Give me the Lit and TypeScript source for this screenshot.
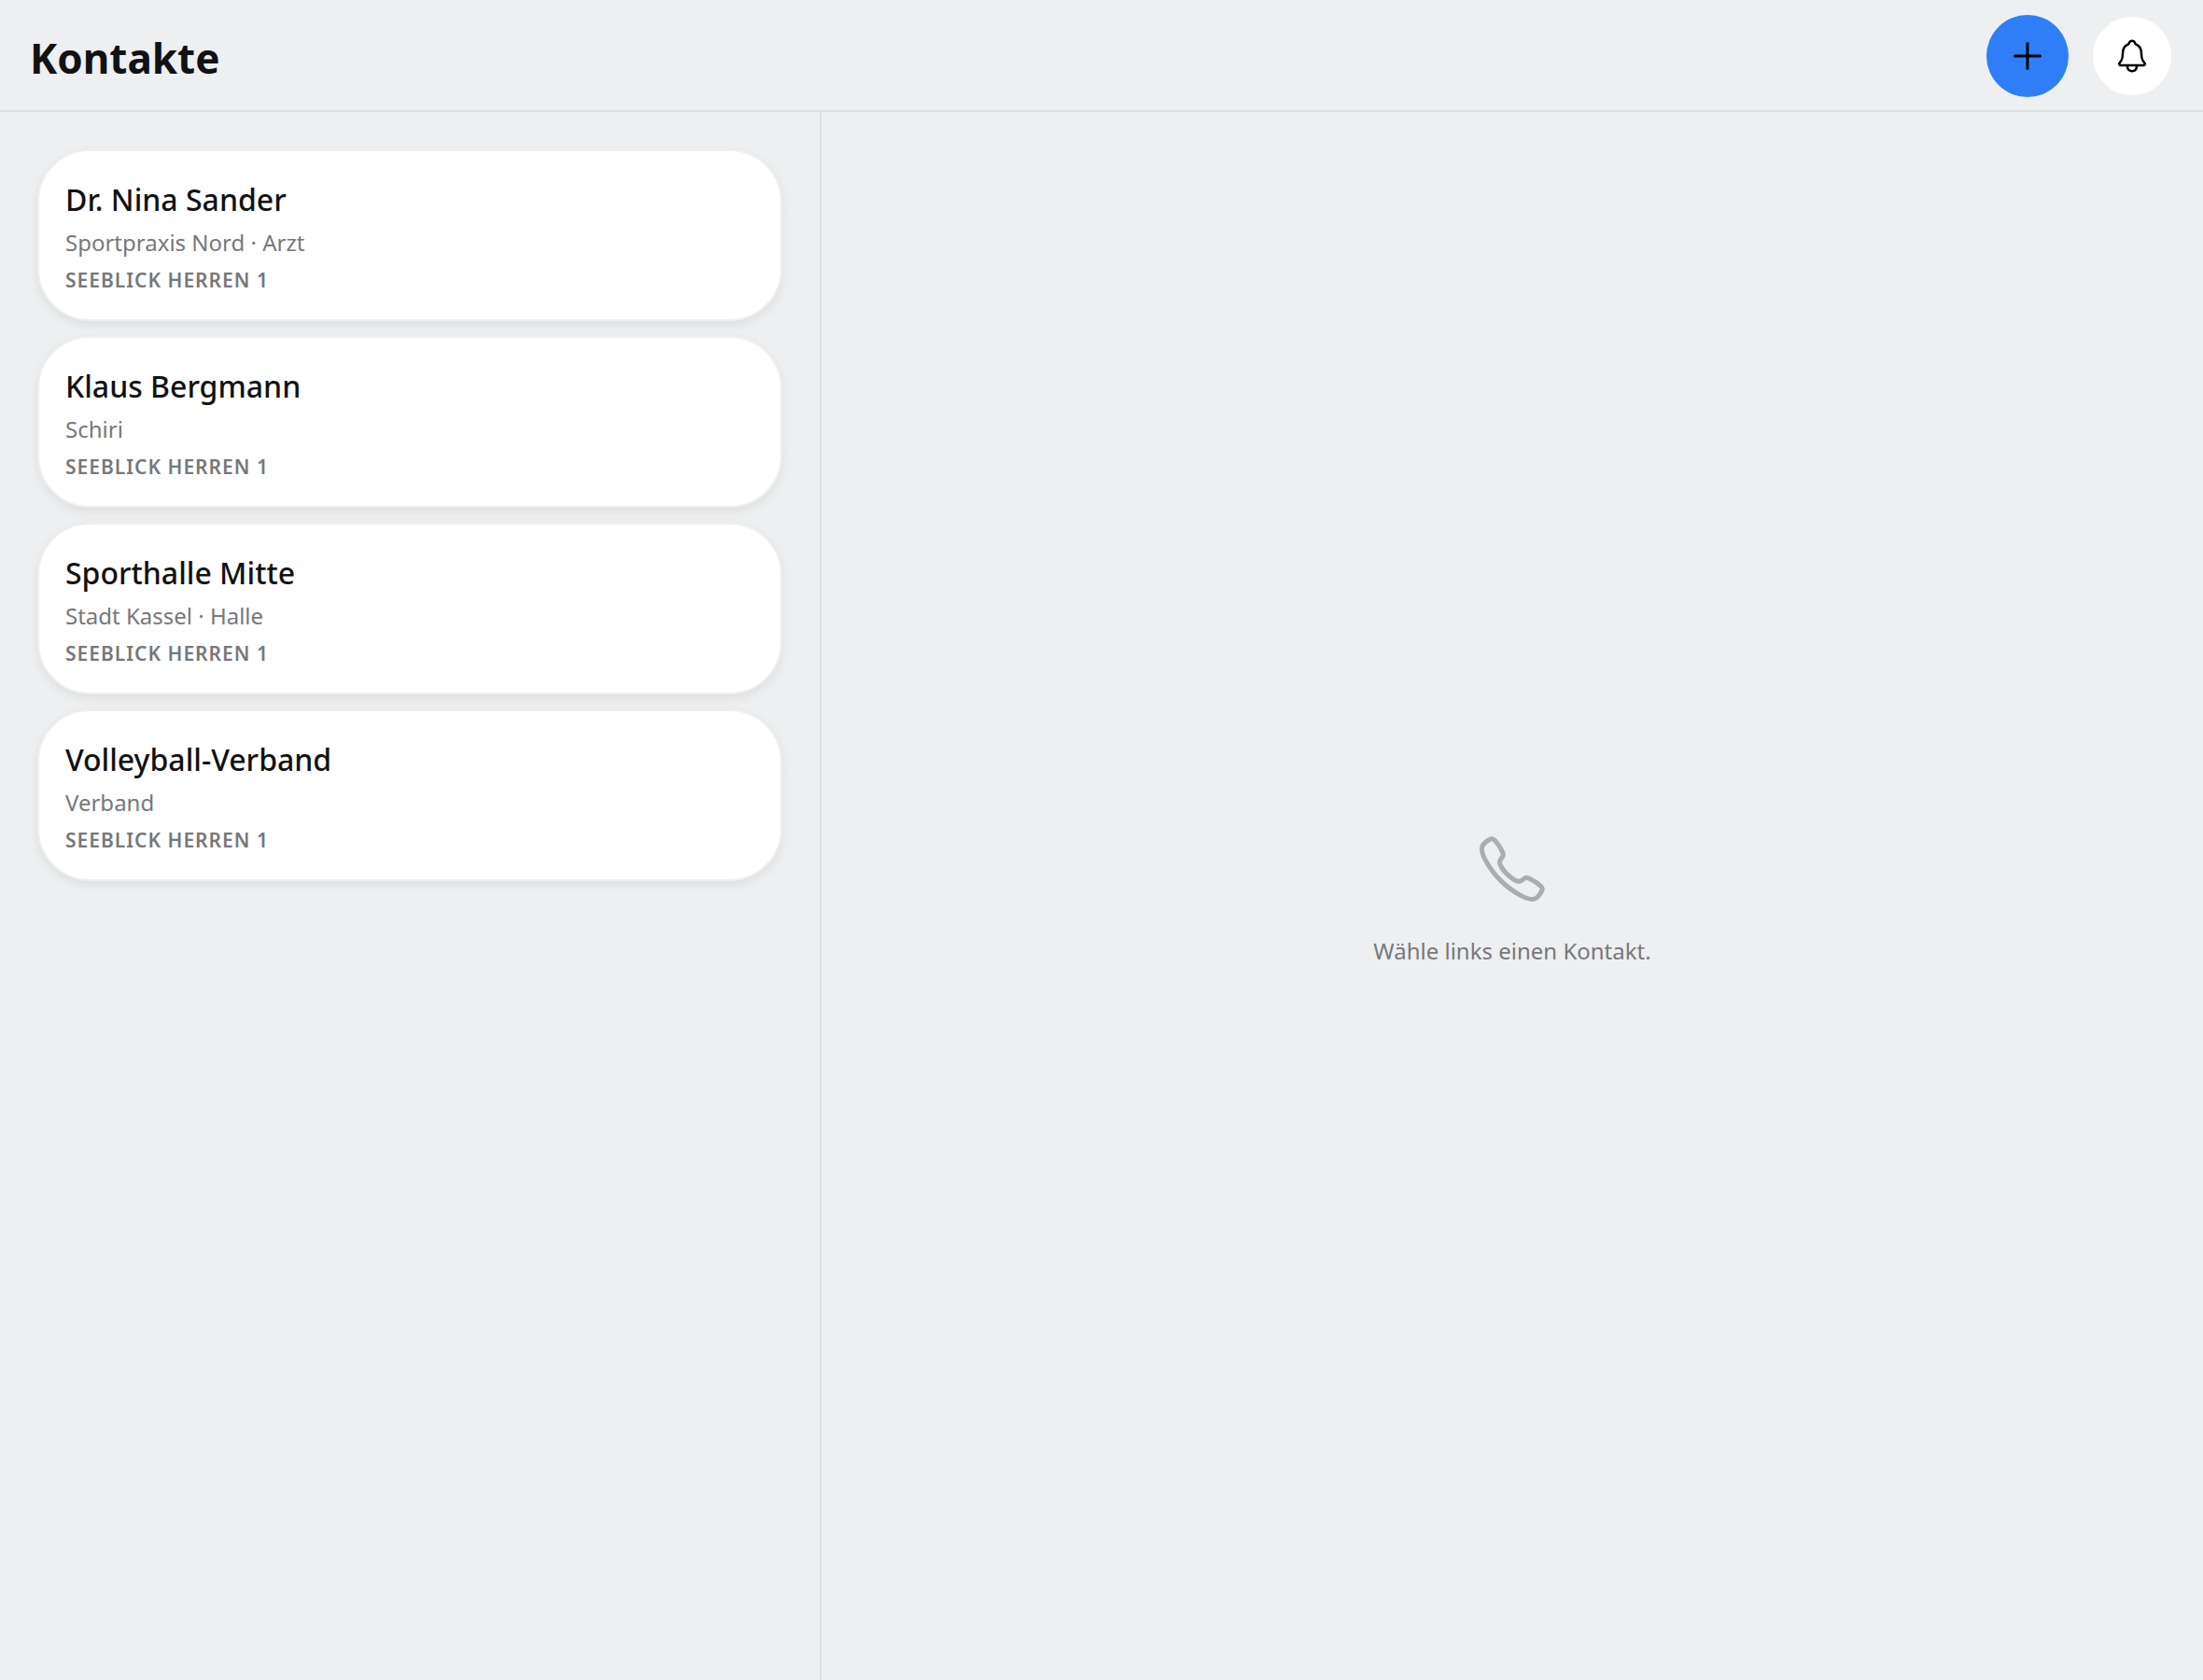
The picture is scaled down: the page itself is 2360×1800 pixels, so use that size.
import { LitElement, html, css } from "lit";
import { customElement, property, state } from "lit/decorators.js";

interface Contact {
  name: string;
  detail: string;
  team: string;
}

const CONTACTS: Contact[] = [
  { name: "Dr. Nina Sander", detail: "Sportpraxis Nord · Arzt", team: "Seeblick Herren 1" },
  { name: "Klaus Bergmann", detail: "Schiri", team: "Seeblick Herren 1" },
  { name: "Sporthalle Mitte", detail: "Stadt Kassel · Halle", team: "Seeblick Herren 1" },
  { name: "Volleyball-Verband", detail: "Verband", team: "Seeblick Herren 1" },
];

@customElement("contact-card")
class ContactCard extends LitElement {
  @property({ attribute: false }) contact!: Contact;

  static styles = css`
    :host {
      display: block;
    }
    .card {
      display: flex;
      flex-direction: column;
      align-items: flex-start;
      box-sizing: border-box;
      width: 100%;
      margin: 0;
      padding: 28px 28px 24px;
      border: 2px solid #eeefef;
      border-radius: 56px;
      background: #fff;
      box-shadow: 0 4px 12px rgba(17, 18, 20, 0.07);
      font-family: "Noto Sans", "Open Sans", sans-serif;
      text-align: left;
      cursor: pointer;
    }
    .name {
      color: #111214;
      font-size: 32px;
      font-weight: 500;
      line-height: 48px;
    }
    .detail {
      color: #77787a;
      font-size: 24px;
      line-height: 44px;
    }
    .team {
      color: #77787a;
      font-size: 21px;
      font-weight: 600;
      line-height: 36px;
      letter-spacing: 1px;
      text-transform: uppercase;
    }
  `;

  render() {
    return html`
      <button class="card" type="button">
        <span class="name">${this.contact.name}</span>
        <span class="detail">${this.contact.detail}</span>
        <span class="team">${this.contact.team}</span>
      </button>
    `;
  }
}

@customElement("app-root")
class AppRoot extends LitElement {
  @state() private contacts = CONTACTS;

  static styles = css`
    :host {
      display: block;
      font-family: "Noto Sans", "Open Sans", sans-serif;
      color: #111214;
    }
    .page {
      display: flex;
      flex-direction: column;
      min-height: 100vh;
      background: #edeff1;
    }
    .topbar {
      display: flex;
      align-items: center;
      justify-content: space-between;
      padding: 16px 32px 14px;
      border-bottom: 2px solid #dedfe1;
    }
    .title {
      margin: 0;
      padding-top: 4px;
      font-size: 44px;
      font-weight: 700;
      line-height: 64px;
    }
    .actions {
      display: flex;
      gap: 24px;
    }
    .round {
      display: flex;
      align-items: center;
      justify-content: center;
      box-sizing: border-box;
      width: 88px;
      height: 88px;
      padding: 0;
      border: 0;
      border-radius: 50%;
      color: #000;
      cursor: pointer;
    }
    .add {
      background: #2f7ef7;
    }
    .alerts {
      border: 2px solid #eeefef;
      background: #fff;
    }
    .icon {
      display: block;
      fill: none;
      stroke: currentColor;
      stroke-width: 32;
      stroke-linecap: round;
      stroke-linejoin: round;
    }
    .icon-add {
      width: 48px;
      height: 48px;
    }
    .icon-bell {
      width: 40px;
      height: 40px;
    }
    .icon-phone {
      width: 80px;
      height: 80px;
      color: #abacad;
      stroke-linecap: butt;
      stroke-linejoin: miter;
      stroke-miterlimit: 10;
    }
    .body {
      display: flex;
      flex: 1;
    }
    .sidebar {
      flex: 0 0 880px;
      box-sizing: border-box;
      border-right: 2px solid #dedfe1;
    }
    .list {
      display: flex;
      flex-direction: column;
      gap: 16px;
      margin: 0;
      padding: 40px;
      list-style: none;
    }
    .empty {
      display: flex;
      flex: 1;
      flex-direction: column;
      align-items: center;
      justify-content: center;
      gap: 28px;
      padding-top: 10px;
    }
    .hint {
      margin: 0;
      color: #77787a;
      font-size: 24px;
      line-height: 40px;
    }
  `;

  render() {
    return html`
      <div class="page">
        <header class="topbar">
          <h1 class="title">Kontakte</h1>
          <div class="actions">
            <button class="round add" type="button" aria-label="Kontakt hinzufügen">
              <svg class="icon icon-add" viewBox="0 0 512 512" aria-hidden="true">
                <path d="M256 112v288M400 256H112" />
              </svg>
            </button>
            <button class="round alerts" type="button" aria-label="Benachrichtigungen">
              <svg class="icon icon-bell" viewBox="0 0 512 512" aria-hidden="true">
                <path d="M427.68 351.43C402 320 383.87 304 383.87 217.35 383.87 138 343.35 109.73 310 96c-4.43-1.82-8.6-6-9.95-10.55C294.2 65.54 277.8 48 256 48s-38.21 17.55-44 37.47c-1.35 4.6-5.52 8.71-9.95 10.53-33.39 13.75-73.87 41.92-73.87 121.35C128.13 304 110 320 84.32 351.43 73.68 364.45 83 384 101.61 384h308.88c18.51 0 27.77-19.61 17.19-32.57zM320 384v16a64 64 0 01-128 0v-16" />
              </svg>
            </button>
          </div>
        </header>
        <main class="body">
          <nav class="sidebar" aria-label="Kontakte">
            <ul class="list">
              ${this.contacts.map(
                (contact) => html`<li><contact-card .contact=${contact}></contact-card></li>`
              )}
            </ul>
          </nav>
          <section class="empty">
            <svg class="icon icon-phone" viewBox="0 0 512 512" aria-hidden="true">
              <path d="M451 374c-15.88-16-54.34-39.35-73-48.76-24.3-12.24-26.3-13.24-45.4.95-12.74 9.47-21.21 17.93-36.12 14.75s-47.31-21.11-75.68-49.39-47.34-61.62-50.53-76.48 5.41-23.23 14.79-36c13.22-18 12.22-21 .92-45.3-8.81-18.9-32.84-57-48.9-72.8C119.9 44 119.9 47 108.83 51.6A160.15 160.15 0 0083 65.37C67 76 58.12 84.83 51.91 98.1s-9 44.38 23.07 102.64 54.57 88.05 101.14 134.49S258.5 406.64 310.85 436c64.76 36.27 89.6 29.2 102.91 23s22.18-15 32.83-31a159.09 159.09 0 0013.8-25.8C465 391.17 468 391.17 451 374z" />
            </svg>
            <p class="hint">Wähle links einen Kontakt.</p>
          </section>
        </main>
      </div>
    `;
  }
}
